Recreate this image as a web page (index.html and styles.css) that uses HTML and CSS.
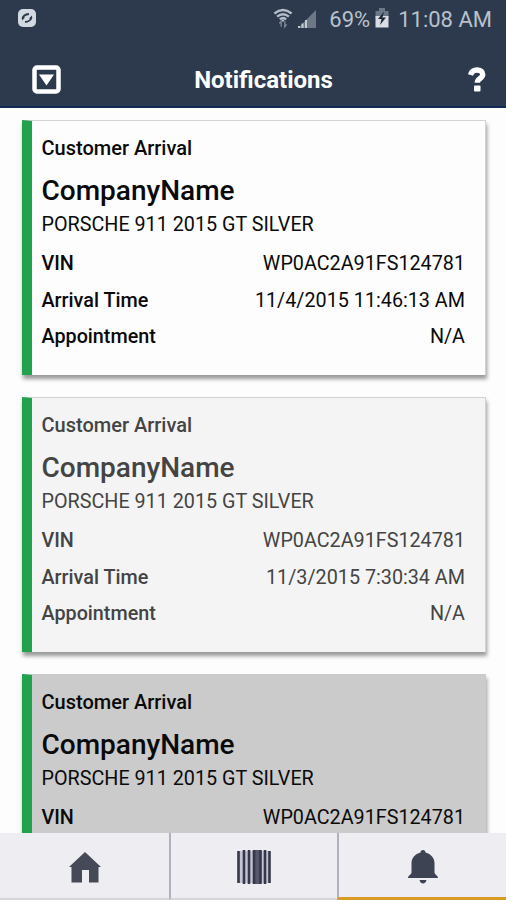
FILE: index.html
```html
<!DOCTYPE html>
<html lang="en">

<head>
    <meta charset="UTF-8">
    <meta name="viewport" content="width=device-width, initial-scale=1.0">
    <title>Notifications</title>
    <link rel="stylesheet" href="styles.css">
</head>

<body>
    <header class="header">
        <div class="status-bar">
            <svg class="sync-icon" width="20" height="20" viewBox="0 0 20 20">
                <rect x="1" y="1" width="18" height="18" rx="5" fill="#d3d9e1"/>
                <path d="M5.500 11Q6 6.500 12 6M14.500 9Q14 13.500 8 14" fill="none" stroke="#2d3a4d" stroke-width="1.800"/>
                <path d="M5 8.500v4l3-3zM15 11.500v-4l-3 3z" fill="#2d3a4d"/>
            </svg>
            <div class="status-right">
                <svg class="wifi-icon" width="20" height="21" viewBox="0 0 22 22">
                    <g fill="none" stroke="#b4bcc7" stroke-width="2.600">
                        <path d="M1.500 5.500Q11-2 20.500 5.500"/>
                        <path d="M4.500 9Q11 3.500 17.500 9"/>
                        <path d="M7.500 12Q11 9 14.500 12"/>
                    </g>
                    <path d="M9 12h4l-2 3z" fill="#b4bcc7"/>
                    <path d="M9 20v-6l-2 2.500M13 14v6l2-2.500" fill="none" stroke="#7d8896" stroke-width="1.500"/>
                </svg>
                <svg class="signal-icon" width="20" height="20" viewBox="0 0 20 20">
                    <path d="M1 20 19 2v18z" fill="#6d7887"/>
                    <path d="M2 20v-2M5.500 20v-4.500M9 20v-8" stroke="#c3cad3" stroke-width="2"/>
                </svg>
                <span class="percent">69%</span>
                <svg class="battery-icon" width="14" height="20" viewBox="0 0 14 20">
                    <path d="M4 0h6v3h3.500v7H.500V3H4z" fill="#6d7887"/>
                    <path d="M.500 8h13v11.500H.500z" fill="#d8dde3"/>
                    <path d="M9 3.500 3 11h3.500L5 17l6-7.500H7.500z" fill="#1f2937"/>
                </svg>
                <span class="time">11:08 AM</span>
            </div>
        </div>
        <div class="title-bar">
            <svg class="menu-icon" width="29" height="29" viewBox="0 0 29 29">
                <rect x="2.500" y="2.500" width="24" height="24" rx="2.500" fill="none" stroke="#fff" stroke-width="4.500"/>
                <path d="M7 9.500h15l-7.500 11z" fill="#fff"/>
            </svg>
            <h1 class="title">Notifications</h1>
            <svg class="help-icon" width="18" height="25" viewBox="0 0 18 25">
                <path d="M2.500 8C3.500 4.500 5.500 3 9 3c3.500 0 5.700 1.600 5.700 4.400 0 4.300-5.400 3.800-5.400 8.300" fill="none" stroke="#fff" stroke-width="5.400"/>
                <rect x="6" y="18.500" width="6.500" height="6" rx="1" fill="#fff"/>
            </svg>
        </div>
    </header>

    <main class="list">
        <section class="card">
            <h3 class="card-type">Customer Arrival</h3>
            <h2 class="card-company">CompanyName</h2>
            <p class="card-car">PORSCHE 911 2015 GT SILVER</p>
            <div class="row"><b>VIN</b><span>WP0AC2A91FS124781</span></div>
            <div class="row"><b>Arrival Time</b><span>11/4/2015 11:46:13 AM</span></div>
            <div class="row"><b>Appointment</b><span>N/A</span></div>
        </section>
        <section class="card card-read">
            <h3 class="card-type">Customer Arrival</h3>
            <h2 class="card-company">CompanyName</h2>
            <p class="card-car">PORSCHE 911 2015 GT SILVER</p>
            <div class="row"><b>VIN</b><span>WP0AC2A91FS124781</span></div>
            <div class="row"><b>Arrival Time</b><span>11/3/2015 7:30:34 AM</span></div>
            <div class="row"><b>Appointment</b><span>N/A</span></div>
        </section>
        <section class="card card-pressed">
            <h3 class="card-type">Customer Arrival</h3>
            <h2 class="card-company">CompanyName</h2>
            <p class="card-car">PORSCHE 911 2015 GT SILVER</p>
            <div class="row"><b>VIN</b><span>WP0AC2A91FS124781</span></div>
        </section>
    </main>

    <nav class="tabs">
        <a class="tab">
            <svg width="32" height="31" viewBox="0 0 32 31">
                <path d="M16 0 32 15h-2.500v15.500H20V18h-7v12.500H2.500V15H0z" fill="#464958"/>
            </svg>
        </a>
        <a class="tab">
            <svg width="34" height="34" viewBox="0 0 34 34">
                <path d="M2 1h30v32H2z" fill="#c3c3d2"/>
                <path d="M16 0h8v34h-8z" fill="#55576a"/>
                <path d="M1.500 1v32M7 0v34M12 0v34M17 0v34M23.500 0v34M28 0v34M32.500 1v32" stroke="#35374a" stroke-width="2.600"/>
            </svg>
        </a>
        <a class="tab tab-active">
            <svg width="30" height="34" viewBox="0 0 30 34">
                <path d="M15 0c1.500 0 2.500 1 2.500 2.500C23 4 26.500 8 26.500 13v9.500c0 2 3.500 3 3.500 5.500H0c0-2.500 3.500-3.500 3.500-5.500V13c0-5 3.500-9 9-10.500C12.500 1 13.500 0 15 0z" fill="#3e4353"/>
                <path d="M11.500 30h7c-.5 2.300-1.800 3.500-3.500 3.500s-3-1.200-3.500-3.500z" fill="#3e4353"/>
            </svg>
        </a>
    </nav>
</body>

</html>
```

FILE: styles.css
```css
* {
    box-sizing: border-box;
}

body {
    font-family: Roboto, "Liberation Sans", sans-serif;
    margin: 0;
    height: 100vh;
    display: flex;
    flex-direction: column;
    background-color: #fdfdfd;
    color: #0a0a0a;
    overflow: hidden;
}

.header {
    flex: none;
    height: 108px;
    background-color: #2d3a4d;
    border-bottom: 2px solid #132b50;
}

.status-bar {
    display: flex;
    justify-content: space-between;
    height: 40px;
    padding: 8px 14px 0 17px;
}

.status-right {
    display: flex;
    color: #b9c1cc;
    font-size: 22px;
    line-height: 24px;
}

.signal-icon {
    margin-left: 4px;
}

.percent {
    margin-left: 12px;
}

.battery-icon {
    margin-left: 5px;
}

.time {
    margin-left: 9px;
}

.title-bar {
    display: flex;
    justify-content: space-between;
    align-items: center;
    height: 80px;
    padding: 0 20px 0 32px;
}

.menu-icon,
.help-icon {
    margin-bottom: 2px;
}

.title {
    margin: 0 2px 0 0;
    color: #fff;
    font-size: 24px;
    font-weight: 700;
}

.list {
    flex: 1;
    min-height: 0;
    overflow: hidden;
    padding: 12px 20px 0 22px;
}

.card {
    height: 255px;
    margin-bottom: 22px;
    padding: 17px 20px 0 9.5px;
    border: 1px solid #d2d2d2;
    border-left: 10px solid #21a24c;
    border-bottom: none;
    background-color: #fdfdfd;
    box-shadow: 1px 4px 4px rgba(0, 0, 0, 0.4);
}

.card-type {
    margin: 0;
    font-size: 20px;
    line-height: 21px;
    font-weight: 500;
}

.card-company {
    margin: 17px 0 0;
    font-size: 28px;
    line-height: 30px;
    font-weight: 500;
}

.card-car {
    margin: 8px 0 11px;
    font-size: 19.75px;
    line-height: 21px;
}

.row {
    display: flex;
    justify-content: space-between;
    font-size: 19.75px;
    line-height: 36.5px;
}

.row b {
    font-weight: 500;
}

.card-read {
    background-color: #f4f4f4;
    color: #444;
}

.card-pressed {
    background-color: #cbcbcb;
    border-color: #cbcbcb;
    border-left-color: #21a24c;
}

.tabs {
    flex: none;
    display: grid;
    grid-template-columns: 169px 168px 1fr;
    height: 67px;
    background-color: #eeedf2;
}

.tab {
    display: flex;
    justify-content: center;
    align-items: center;
    padding-top: 3px;
    border-bottom: 2px solid #d5d5da;
}

.tab + .tab {
    border-left: 2px solid #b0b0c0;
}

.tab-active {
    border-bottom: 3px solid #d99a22;
}
```
